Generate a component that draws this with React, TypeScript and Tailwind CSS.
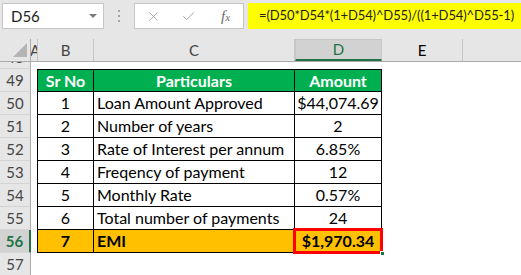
import { X, Check } from "lucide-react";

const rows = [
  { n: 50, sr: "1", item: "Loan Amount Approved", amount: "$44,074.69" },
  { n: 51, sr: "2", item: "Number of years", amount: "2" },
  { n: 52, sr: "3", item: "Rate of Interest per annum", amount: "6.85%" },
  { n: 53, sr: "4", item: "Freqency of payment", amount: "12" },
  { n: 54, sr: "5", item: "Monthly Rate", amount: "0.57%" },
  { n: 55, sr: "6", item: "Total number of payments", amount: "24" },
];

function RowHead({ n, active = false }: { n: number; active?: boolean }) {
  return (
    <div
      className={
        active
          ? "flex h-full w-[31px] shrink-0 items-center justify-center border-r-2 border-r-[#217346] border-b border-b-[#d4d4d4] bg-[#d2d2d2] text-[15px] text-[#217346]"
          : "flex h-full w-[31px] shrink-0 items-center justify-center border-r border-r-[#ababab] border-b border-b-[#d4d4d4] bg-[#e6e6e6] text-[15px] text-[#444]"
      }
    >
      {n}
    </div>
  );
}

export default function App() {
  return (
    <div className="h-[275px] w-[521px] overflow-hidden bg-white font-[Lato,sans-serif] text-[15px] text-black">
      {/* formula bar */}
      <div className="flex h-[39px] items-start bg-[#e6e6e6] pl-[2px] pt-[3px]">
        <div className="flex h-[26px] w-[102px] shrink-0 items-center justify-between border border-[#c6c6c6] bg-white pl-[8px] pr-[6px]">
          <span className="text-[#222]">D56</span>
          <span className="h-0 w-0 border-x-[4px] border-t-[4px] border-x-transparent border-t-[#7a7a7a]" />
        </div>
        <div className="flex h-[26px] w-[30px] shrink-0 flex-col items-center justify-center gap-[3px]">
          <span className="h-[2px] w-[2px] bg-[#a6a6a6]" />
          <span className="h-[2px] w-[2px] bg-[#a6a6a6]" />
          <span className="h-[2px] w-[2px] bg-[#a6a6a6]" />
        </div>
        <div className="flex h-[26px] w-[110px] shrink-0 items-center border border-[#c6c6c6] bg-white pl-[11px]">
          <X size={15} strokeWidth={1.4} className="text-[#a6a6a6]" />
          <Check size={15} strokeWidth={1.6} className="ml-[20px] text-[#a6a6a6]" />
          <span className="ml-[25px] font-['Liberation_Serif',serif] text-[15px] italic text-[#6b6b6b]">
            f<span className="text-[11px]">x</span>
          </span>
        </div>
        <div className="ml-[4px] flex h-[26px] flex-1 items-center overflow-hidden whitespace-nowrap bg-[#ffff00] pl-[11px] text-[13px] tracking-[-0.12px] text-[#222]">
          =(D50*D54*(1+D54)^D55)/((1+D54)^D55-1)
        </div>
      </div>

      {/* column headers */}
      <div className="flex h-[23px] border-b border-[#ababab] bg-[#e6e6e6] text-[#444]">
        <div className="relative w-[31px] shrink-0 border-r border-[#ababab]">
          <svg className="absolute left-0 top-0" width="31" height="23">
            <polygon points="13,18 27,18 27,4" fill="#b4b4b4" />
          </svg>
        </div>
        <div className="flex w-[7px] shrink-0 items-center overflow-hidden border-r border-[#c6c6c6]">
          <span className="-ml-[1px]">A</span>
        </div>
        <div className="flex w-[56px] shrink-0 items-center justify-center border-r border-[#c6c6c6]">B</div>
        <div className="flex w-[201px] shrink-0 items-center justify-center border-r border-[#c6c6c6]">C</div>
        <div className="flex w-[87px] shrink-0 items-center justify-center border-x border-t border-[#c6c6c6] border-b-2 border-b-[#217346] bg-[#d2d2d2] text-[#217346]">
          D
        </div>
        <div className="flex w-[81px] shrink-0 items-center justify-center border-r border-[#c6c6c6] text-black">E</div>
        <div className="flex-1" />
      </div>

      {/* sheet body */}
      <div className="flex h-[7px] overflow-hidden">
        <div className="-mt-[16px] h-[23px]">
          <RowHead n={48} />
        </div>
      </div>

      {/* table header row */}
      <div className="flex h-[23px] text-[16px]">
        <RowHead n={49} />
        <div className="w-[6px] shrink-0" />
        <div className="flex w-[57px] shrink-0 items-center justify-center border border-black bg-[#00b050] font-bold text-white">
          Sr No
        </div>
        <div className="flex w-[201px] shrink-0 items-center justify-center border-y border-r border-black bg-[#00b050] font-bold text-white">
          Particulars
        </div>
        <div className="flex w-[87px] shrink-0 items-center justify-center border-y border-r border-black bg-[#00b050] font-bold text-white">
          Amount
        </div>
      </div>

      {rows.map((r) => (
        <div key={r.n} className="flex h-[23px] text-[16px]">
          <RowHead n={r.n} />
          <div className="w-[6px] shrink-0" />
          <div className="flex w-[57px] shrink-0 items-center justify-center border-x border-b border-black">{r.sr}</div>
          <div className="flex w-[201px] shrink-0 items-center whitespace-nowrap border-b border-r border-black pl-[3px]">
            {r.item}
          </div>
          <div className="flex w-[87px] shrink-0 items-center justify-center border-b border-r border-black">{r.amount}</div>
        </div>
      ))}

      {/* EMI row */}
      <div className="flex h-[23px] text-[16px] font-bold">
        <RowHead n={56} active />
        <div className="w-[6px] shrink-0" />
        <div className="flex w-[57px] shrink-0 items-center justify-center border-x border-b border-black bg-[#ffc000]">7</div>
        <div className="flex w-[201px] shrink-0 items-center border-b border-r border-black bg-[#ffc000] pl-[3px]">EMI</div>
        <div className="relative flex w-[87px] shrink-0 items-center justify-center border-b border-r border-black bg-[#ffc000]">
          $1,970.34
          <div className="absolute -inset-[2px] border-[3px] border-[#ff0000]" />
          <div className="absolute -bottom-[4px] -right-[4px] h-[5px] w-[5px] border border-white bg-[#217346]" />
        </div>
      </div>

      <div className="flex h-[23px]">
        <RowHead n={57} />
      </div>
    </div>
  );
}
